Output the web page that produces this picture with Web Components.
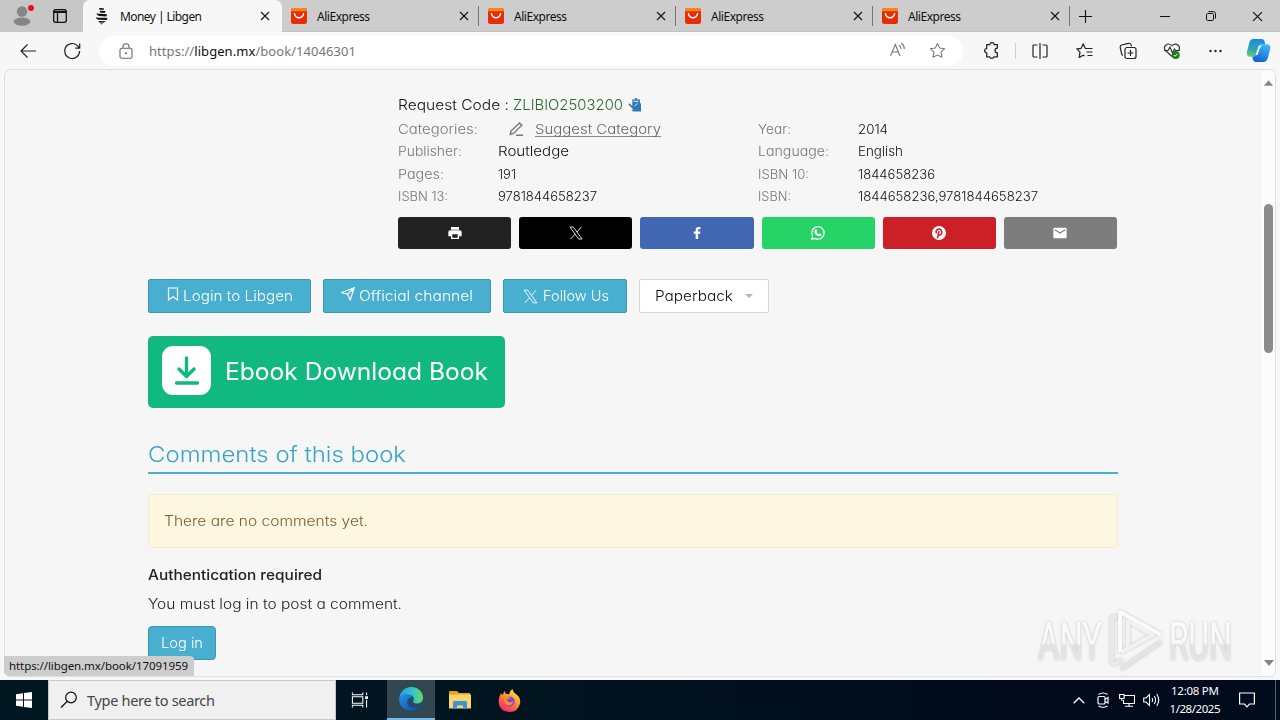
<!DOCTYPE html>
<html lang="en"><head><meta charset="utf-8"><title>Money | Libgen</title>
<style>
html,body{margin:0;width:1280px;height:720px;overflow:hidden;background:#f6f6f6}
body{font-family:"Noto Sans","Open Sans",sans-serif}
</style></head><body>
<desktop-screen></desktop-screen>
<script>
const ICONS={
person:['0 0 20 20','<circle cx="10" cy="5.5" r="5.2" fill="#858585"/><ellipse cx="10" cy="15.6" rx="8.3" ry="4.2" fill="#858585"/>'],
workspace:['0 0 16 16','<g fill="none" stroke="#111" stroke-width="1.3"><rect x="1.7" y="1.7" width="12.6" height="12.6" rx="2"/><path d="M2 3.900h12" stroke-width="2.200"/><path d="M5.500 5v9"/></g>'],
libgen:['0 0 14 18','<g fill="#111"><path d="M4 1.300Q6 .5 9 1.400V2.800L4.500 2.700zM4.800 3.700L10.500 4 9.800 6 5 5.400zM1.500 6.200C4 7 8 6.500 12 7.300L11.500 9.600 4 9C2.800 8.500 1.800 7.700 1.500 6.200zM1 10.200C4 11.200 8 10.500 12.500 11L11.700 13.100 4 12.800C2.200 12.500 1.200 11.700 1 10.200zM3.500 14.100L11 14.200 8.500 15.700 4 15.500zM5 16.300L8 16.400 6.500 17.500z"/></g>'],
ali:['0 0 16 16','<rect width="16" height="16" rx="2.5" fill="#e62e04"/><path d="M0 3.2V2.5A2.5 2.5 0 0 1 2.5 0h11A2.5 2.5 0 0 1 16 2.5v.7z" fill="#f7871d"/><path d="M3.500 5.800c1.200 5.200 7.800 5.200 9 0" fill="none" stroke="#fff" stroke-width="1.500" stroke-linecap="round"/>'],
x:['0 0 10 10','<path d="M1 1l8 8M9 1L1 9" fill="none" stroke="#111" stroke-width="1.1"/>'],
plus:['0 0 14 14','<path d="M7 0v14M0 7h14" stroke="#111" stroke-width="1.2"/>'],
min:['0 0 10 10','<path d="M0 5.5h10" stroke="#111"/>'],
restore:['0 0 10 10','<g fill="none" stroke="#111"><rect x=".5" y="2.5" width="7" height="7" rx="1.2"/><path d="M2.5.6H7.3Q9.5.6 9.5 2.8V7.5"/></g>'],
back:['0 0 18 16','<path d="M17 8H2M8.5 1.5L2 8l6.500 6.500" fill="none" stroke="#222" stroke-width="1.2"/>'],
reload:['0 0 18 18','<path d="M16.6 9A7.5 7.500 0 1 1 14.500 3.800L16.500 6M16.700 1.500V6.200H12.200" fill="none" stroke="#222" stroke-width="1.200"/>'],
lock:['0 0 14 16','<g fill="none" stroke="#666" stroke-width="1.100"><rect x="1" y="5.200" width="12" height="10" rx="1.800"/><path d="M4 5V3.700a3 3 0 0 1 6 0V5"/></g><circle cx="7" cy="10.200" r="1" fill="#666"/>'],
read:['0 0 18 16','<g fill="none" stroke="#777" stroke-width="1.100"><path d="M1.500 14L6.300 2.500 11 14M3.200 10h6.200M10 3q2 1.500 2 4M12.200 1q3.200 2.300 3.100 6"/></g>'],
star:['0 0 18 18','<path d="M9 1.500l2.300 4.900 5.300.7-3.900 3.700 1 5.400L9 13.600l-4.700 2.600 1-5.400L1.400 7.100l5.300-.7z" fill="none" stroke="#777" stroke-width="1.100" stroke-linejoin="round"/>'],
puzzle:['0 0 16 16','<path d="M3.500 2.500h3a2 2 0 0 1 4 0h3v3.300a2.200 2.200 0 0 0 0 4.400v3.800h-3.300a2 2 0 0 1-3.800 0H3.500v-3.800a2 2 0 0 1 0-4z" fill="none" stroke="#222" stroke-width="1.200" stroke-linejoin="round"/>'],
split:['0 0 16 16','<path d="M5.500 2H2q-1 0-1 1v10q0 1 1 1h3.500M10.500 2H14q1 0 1 1v10q0 1-1 1h-3.500M8 0v16" fill="none" stroke="#222" stroke-width="1.200"/>'],
favs:['0 0 18 16','<path d="M10.500 5.500L9.300 5.300 7.200.9 5.100 5.300.8 5.900l3.200 3.200-.8 5.300 4-2.200 1.300.7M10 5.500h6.500M10.500 9h6M11.500 12.500h5" fill="none" stroke="#222" stroke-width="1.200" stroke-linejoin="round"/>'],
coll:['0 0 18 18','<g fill="none" stroke="#222" stroke-width="1.200"><rect x="6" y="5.500" width="11" height="11" rx="2"/><path d="M11.500 8v6M8.500 11h6M4 13.500q-1-.4-1.300-1.400L1.200 5.300Q1 3.500 2.600 3L9.500 1.300q2-.3 2.600 1.600l.4 1.300"/></g>'],
heart:['0 0 18 18','<path d="M9 14.500L2.200 8.300C-.2 4.500 4.500-.4 9 3.600 13.500-.4 18 4.500 15.800 8.300M1 8.500h4l2-3.500 2.500 6 2-4 1 1.500H17" fill="none" stroke="#333" stroke-width="1.200"/><circle cx="12.700" cy="13" r="4" fill="#1b7d1b"/><path d="M10.800 13l1.300 1.300 2.500-2.500" fill="none" stroke="#fff"/>'],
dots:['0 0 14 4','<g fill="#222"><circle cx="2" cy="2" r="1.200"/><circle cx="7" cy="2" r="1.200"/><circle cx="12" cy="2" r="1.200"/></g>'],
copilot:['0 0 24 24','<defs><linearGradient id="a" x1=".5" y1="0" x2=".2" y2="1"><stop stop-color="#1a8be0"/><stop offset=".6" stop-color="#2aa7b8"/><stop offset="1" stop-color="#73c96b"/></linearGradient><linearGradient id="b" x1=".7" y1="0" x2=".3" y2="1"><stop stop-color="#39b8f5"/><stop offset="1" stop-color="#155fd6"/></linearGradient></defs><path d="M7 1h8q2.500 0 3 3l.4 2h-4q-2 0-2.700 2l-2.500 7.500Q8.500 18 6 18H3.500Q0 17.500 1 13L3.300 4Q4.300 1 7 1z" fill="url(#a)"/><path d="M17 23H9.500q-2.500 0-3-3L6 18q2.500 0 3.200-2.500L11.700 8q.7-2 2.700-2h6q3.600.5 2.900 4.500L20.700 20q-1 3-3.700 3z" fill="url(#b)"/><path d="M12.500 7.500h3.200q-2 .8-2.600 2.800l-1.600 4.700q-.8 2-2.500 1.500z" fill="#fff"/>'],
copy:['0 0 14 14','<path d="M4.300 1.500h2.200a1.500 1.500 0 0 1 3 0H12V5l1 .8V13.500H5L3.300 11.800H5.500L.5 6.500 1.300 5.300 4.300 8z" fill="#2f78b7"/><path d="M5.500 3.300h5M6.500 8.300L9.500 5.300" stroke="#f6f6f6" stroke-width="1"/>'],
pencil:['0 0 14 14','<path d="M1.300 12.400L2 9 10.500 1l2.300 2.200L4.500 11.400zM7 13.300h7" fill="none" stroke="#777" stroke-width="1.400"/>'],
print:['0 0 24 24','<path fill="#fff" d="M19 8H5c-1.660 0-3 1.340-3 3v6h4v4h12v-4h4v-6c0-1.660-1.340-3-3-3zm-3 11H8v-5h8v5zm2-16H6v4h12V3z"/>'],
tw:['0 0 24 24','<path d="M3 3h5l13 18h-5zM20 3L13.300 10.600M10.700 13.600L4 21" fill="none" stroke="#fff" stroke-width="1.300"/>'],
fb:['0 0 24 24','<path fill="#fff" d="M13.700 21v-8h3l.5-3.300h-3.500V7.800c0-1 .4-1.600 1.700-1.600h1.800V3.200C16 3 14.500 3 14 3c-2.600 0-4 1.600-4 4.300v2.400H7V13h3v8z"/>'],
wa:['0 0 24 24','<path d="M2.500 21.500l1.400-5A9.300 9.300 0 1 1 7.500 20z" fill="none" stroke="#fff" stroke-width="1.900"/><path d="M8 6.800q1.500-.8 2 .5l.7 1.700-1 1.400q1.300 2.500 3.900 3.600l1.300-1.500 2.500 1.200q0 3-3.500 3-5.500-.6-7.600-6.200Q6.500 8 8 6.800z" fill="#fff"/>'],
pin:['0 0 24 24','<circle cx="12" cy="12" r="10.500" fill="#fff"/><path d="M8.500 12.700Q6.500 9.500 9 7q3-2.300 6 .3 2.500 3.500 0 7-2 1.800-4-.1M12 9L9.600 20" fill="none" stroke="#cb2028" stroke-width="2.200"/>'],
mail:['0 0 24 24','<path fill="#fff" d="M20 4H4c-1.100 0-2 .9-2 2v12c0 1.100.9 2 2 2h16c1.100 0 2-.9 2-2V6c0-1.100-.9-2-2-2zm0 4l-8 5-8-5V6l8 5 8-5z"/>'],
mark:['0 0 12 14','<path d="M1.500 1h9v12L6 9.800 1.500 13z" fill="none" stroke="#fff" stroke-width="1.200"/>'],
send:['0 0 14 14','<path d="M.8 5.500L13.200.8 9.200 13 6.500 7.300zM6.500 7.300L13 1" fill="none" stroke="#fff" stroke-width="1.200"/>'],
caret:['0 0 8 4','<path d="M0 0h8L4 4z" fill="#b5b5b5"/>'],
dl:['0 0 49 49','<rect width="49" height="49" rx="11" fill="#fff"/><path d="M24.500 12v18M17 23l7.500 7.500L32 23M14.500 37h21" fill="none" stroke="#11b981" stroke-width="3.400" stroke-linecap="round" stroke-linejoin="round"/>'],
up:['0 0 10 6','<path d="M0 6L5 0l5 6z" fill="#858585"/>'],
down:['0 0 10 6','<path d="M0 0h10L5 6z" fill="#858585"/>'],
win:['0 0 16 16','<path d="M0 2.300L7 1.200V7.500H0zM8 1L16 0V7.500H8zM0 8.500H7V14.800L0 13.700zM8 8.500h8V16L8 15z" fill="#fff"/>'],
search:['0 0 18 18','<circle cx="11" cy="6.500" r="5.300" fill="none" stroke="#111" stroke-width="1.200"/><path d="M7 10.500L1 16.500" stroke="#111" stroke-width="1.300"/>'],
task:['0 0 18 16','<path d="M1.500 0v2.500h11V0M1.500 16v-2.500h11V16M1.500 4.500h11v7h-11zM16.500 0v3M16.500 8v8" fill="none" stroke="#fff" stroke-width="1.100"/><rect x="15" y="4" width="3" height="3" fill="#fff"/>'],
edge:['0 0 24 24','<defs><linearGradient id="e" x1="0" x2="1"><stop stop-color="#299fe0"/><stop offset=".55" stop-color="#2fc2cf"/><stop offset="1" stop-color="#63dd62"/></linearGradient><linearGradient id="f" x1="0" y1="0" x2="1" y2="1"><stop stop-color="#2494e0"/><stop offset="1" stop-color="#0b4aa0"/></linearGradient></defs><path d="M.2 10.500C1.500 3.500 7 0 12 0c7 0 12 5 12 10.500 0 4-3 6-6.500 6-2.500 0-4-1-3.200-2.200C16 11 13.500 8 9.500 7.800 5 7.600 1.500 9 .2 10.500z" fill="url(#e)"/><path d="M.1 12C1 8.500 5 6.500 9 7.600c2.500.7 4 2 4.700 3.400C9 10 7 14 9 18c1.800 3.600 8 4 12.700 1-2 3-5.700 5-9.700 5C5 24 0 18.500.1 12z" fill="url(#f)"/><path d="M13.700 11c-3 0-5 3-4 6 1.800 4.500 8 4.500 12.300 1.600" fill="none" stroke="#124ea0" stroke-width="1.500"/>'],
folder:['0 0 22 18','<path d="M0 1q0-1 1-1h7l2 2h11v4H0z" fill="#e8a317"/><rect y="3.500" width="22" height="14" fill="#fbd66b"/><path d="M4 18v-6.500q0-1.500 1.500-1.500h11q1.500 0 1.500 1.500V18h-4v-3.500H8V18z" fill="#3a95d8"/>'],
firefox:['0 0 24 24','<defs><linearGradient id="g" x1=".8" y1="0" x2=".2" y2="1"><stop stop-color="#fff04a"/><stop offset=".4" stop-color="#ff9a2a"/><stop offset=".75" stop-color="#ff4a50"/><stop offset="1" stop-color="#e5247a"/></linearGradient></defs><path d="M1.500 8L3 4.500 4.500 6.200 7 2l1 3q2 0 3.500.7Q12 2 15 0q.3 3 4 5.500Q24 9 23 15q-2 8.500-11 9Q2 23.500.7 14.500.5 10.500 1.500 8z" fill="url(#g)"/><circle cx="12" cy="13" r="5.300" fill="#7846d8"/><path d="M6 8.500q4-2.500 7 0-1 2-3.500 2.300-.5 1.500 1.500 2.700 3 1 4.500-1 .5 4-4 4.800Q6 17 6 8.500z" fill="#ff8a2d"/>'],
chev:['0 0 12 7','<path d="M.7 6.300L6 1l5.300 5.300" fill="none" stroke="#fff" stroke-width="1.300"/>'],
cam:['0 0 14 16','<g fill="none" stroke="#fff" stroke-width="1.200"><rect x="2" y="4.500" width="7" height="7.500" rx="1.300"/><path d="M9 7.500L12 5.500V11L9 9.500M2.500 2.500q4.500-3 9 0M2.500 14q4.500 2.500 9 0"/></g>'],
net:['0 0 16 14','<path d="M4.500 2.500H15.500v8H4.500V7M10 10.500V13M6 13.300h8M.6 1.500h4.500v4H.6zM2.800 5.500V8" fill="none" stroke="#fff" stroke-width="1.100"/>'],
vol:['0 0 17 14','<path d="M.7 5H3l3.500-3.500v11L3 9H.7zM9 5q1.200 2 0 4M11.300 3q2.500 4 0 8M13.700 1q4 6 0 12" fill="none" stroke="#fff" stroke-width="1.100"/>'],
note:['0 0 16 16','<path d="M.6 1h14.800v11H10.500L8 14.800 5.500 12H.6z" fill="none" stroke="#fff" stroke-width="1.200"/>']
};
const make=(name,html,setup)=>customElements.define(name,class extends HTMLElement{
  constructor(){super();this.attachShadow({mode:'open'})}
  connectedCallback(){if(this.shadowRoot.childNodes.length)return;this.shadowRoot.innerHTML=typeof html==='function'?html(this):html;if(setup)setup(this)}
});
const ic=(n,w,h,s='')=>`<ui-icon name="${n}" w="${w}" h="${h||w}" style="${s}"></ui-icon>`;
const t=(w,s)=>`<fit-text w="${w}">${s}</fit-text>`;
const p=(w,s)=>`<fit-text stretch w="${w}">${s}</fit-text>`;

make('ui-icon',e=>{const i=ICONS[e.getAttribute('name')],w=e.getAttribute('w'),h=e.getAttribute('h');
 return `<style>:host{display:inline-block;flex:none;width:${w}px;height:${h}px}svg{display:block}</style><svg width="${w}" height="${h}" viewBox="${i[0]}">${i[1]}</svg>`});

make('browser-tab',e=>`<style>:host{display:flex;align-items:center;box-sizing:border-box;width:197px;height:32px;padding:0 10px 0 9px;font-size:12px;color:#111;flex:none;background:linear-gradient(#777,#777) right 6px/1px 20px no-repeat}
:host([active]){background:#f7f7f7;border-radius:7px 7px 0 0;width:199px;padding-left:12px;padding-right:12px}
.l{flex:1;margin-left:10px}:host([active]) .l{margin-left:11px}</style>${e.hasAttribute('active')?ic('libgen',14,18):ic('ali',16)}<span class="l"><slot></slot></span>${ic('x',10)}`);

make('tab-strip',`<style>:host{display:flex;height:32px;background:#cdcdcd;align-items:center;box-shadow:inset 0 -1px #c0c0c0}
.p{display:flex;width:83px;height:32px;box-sizing:border-box;padding-left:12px;align-items:center;gap:20px;background:#c7c7c7;border-radius:0 0 6px 0;position:relative}
.p i{position:absolute;left:28px;top:5px;width:6px;height:6px;border-radius:50%;background:#e81123}
.w{display:flex;margin-left:auto;gap:36px;padding-right:17px;align-items:center}</style>
<div class="p">${ic('person',20)}<i></i>${ic('workspace',16)}</div>
<browser-tab active>${t(82,'Money | Libgen')}</browser-tab>
<browser-tab>${t(53,'AliExpress')}</browser-tab><browser-tab>${t(53,'AliExpress')}</browser-tab><browser-tab>${t(53,'AliExpress')}</browser-tab><browser-tab>${t(53,'AliExpress')}</browser-tab>
${ic('plus',13,13,'margin-left:9px')}
<div class="w">${ic('min',10)}${ic('restore',10)}${ic('x',11)}</div>`);

make('tool-bar',`<style>:host{display:flex;height:37px;background:#f7f7f7;align-items:center;padding-left:19px}
.a{display:flex;box-sizing:border-box;width:864px;height:30px;background:#fff;border-radius:15px;margin-left:18px;align-items:center;padding:0 17px 0 20px;font-size:13px;color:#757575}
.a b{font-weight:400;color:#111}.g{margin-left:auto;display:flex;gap:22px}
.r{display:flex;align-items:center;margin-left:20px}.s{width:1px;height:16px;background:#d0d0d0;margin:0 16px 0 15px}</style>
${ic('back',18,16)}${ic('reload',18,18,'margin-left:26px')}
<div class="a">${ic('lock',14,16,'margin-right:16px')}${t(207,'https://<b>libgen.mx</b>/book/14046301')}<span class="g">${ic('read',18,16)}${ic('star',17,17)}</span></div>
<div class="r">${ic('puzzle',17)}<span class="s"></span>${ic('split',16)}${ic('favs',18,16,'margin-left:28px')}${ic('coll',18,18,'margin-left:25px')}${ic('heart',18,18,'margin-left:26px')}${ic('dots',15,4,'margin-left:27px')}${ic('copilot',25,25,'margin-left:23px')}</div>`);

make('detail-row',`<style>:host{display:grid;grid-template-columns:100px 260px 100px 1fr;height:22.300px;align-items:center;font-size:13px;color:#111}.k{color:#777}slot{display:block}</style>
<span class="k"><slot name="a"></slot></span><slot name="b"></slot><span class="k"><slot name="c"></slot></span><slot name="d"></slot>`);
make('share-button',e=>`<style>:host{display:flex;flex:1;height:32px;border-radius:3px;align-items:center;justify-content:center;background:${e.getAttribute('bg')}}</style>${ic(e.getAttribute('icon'),16)}`);
make('action-button',`<style>:host{display:flex;box-sizing:border-box;height:34px;align-items:center;justify-content:center;background:#49afd0;border:1px solid #4094b2;border-radius:2px;color:#fff;font-size:14.500px;gap:4px;padding-bottom:1px}
:host([plain]){background:#fff;border-color:#d5d5d5;color:#111;gap:12px}:host([round]){border-radius:4px}</style><slot></slot>`);
const row=(a,aw,b,bw,c,cw,d,dw)=>`<detail-row><span slot="a">${p(aw,a)}</span><span slot="b">${b.startsWith('<')?b:p(bw,b)}</span><span slot="c">${p(cw,c)}</span><span slot="d">${p(dw,d)}</span></detail-row>`;

make('book-page',`<style>:host{display:block;flex:1;padding:0 144px 0 143px;font-family:Inter,"Open Sans",sans-serif;font-weight:300;font-feature-settings:"cv11","ss03";color:#222}
.d{margin-left:250px;padding-top:24px;width:719px}.q{display:flex;height:24px;line-height:22px;font-size:14.500px;color:#111}.q .g{color:#2b6a2e;margin:0 5px 0 4px}
.sg{display:flex;align-items:center;color:#666}.sg u{display:inline-flex;text-decoration:none;border-bottom:1px solid #888;line-height:14px;margin-top:1px}
.s{display:flex;gap:8px;margin-top:9.500px}.b{display:flex;gap:12px;margin-top:30px}
.dl{display:flex;box-sizing:border-box;width:357px;height:72px;margin-top:23px;background:#11b981;border-radius:5px;align-items:center;padding:0 0 2px 14px;gap:14px;color:#fff;font-size:24px;font-weight:400}
.dl fit-text{margin-top:2px}
h2{font-weight:300;font-size:22px;line-height:35px;color:#35a5c9;margin:29px 0 20px;border-bottom:2px solid #49afd0;height:35px;width:970px}
.n{box-sizing:border-box;width:970px;height:54px;background:#fdf6e1;border:1px solid #f8ead0;border-radius:4px;padding-left:15px;line-height:51px;font-size:14px;color:#7d5c2c}
.t{font-size:14px;line-height:20px}</style>
<div class="d"><div class="q">${p(111,'Request Code :')}<span class="g">${p(110,'ZLIBIO2503200')}</span>${ic('copy',14,14,'margin-top:4px')}</div>
${row('Categories:',80,`<span class="sg">${ic('pencil',14,14,'margin:0 12px 0 11px')}<u>${p(126,'Suggest Category')}</u></span>`,0,'Year:',33,'2014',30)}
${row('Publisher:',64,'Routledge',71,'Language:',71,'English',45)}
${row('Pages:',46,'191',18,'ISBN 10:',51,'1844658236',77)}
${row('ISBN 13:',50,'9781844658237',99,'ISBN:',33,'1844658236,9781844658237',180)}
<div class="s"><share-button icon="print" bg="#222"></share-button><share-button icon="tw" bg="#000"></share-button><share-button icon="fb" bg="#4267b2"></share-button><share-button icon="wa" bg="#25d366"></share-button><share-button icon="pin" bg="#cb2028"></share-button><share-button icon="mail" bg="#7d7d7d"></share-button></div></div>
<div class="b"><action-button style="width:163px">${ic('mark',12,14,'margin-top:-2px')}${p(110,'Login to Libgen')}</action-button><action-button style="width:168px">${ic('send',14,14,'margin-top:-3px')}${p(114,'Official channel')}</action-button><action-button style="width:124px">${ic('tw',17,17,'margin-top:2px')}${p(66,'Follow Us')}</action-button><action-button plain style="width:130px">${p(78,'Paperback')}${ic('caret',8,4,'margin-top:2px')}</action-button></div>
<div class="dl">${ic('dl',49)}${p(263,'Ebook Download Book')}</div>
<h2>${p(258,'Comments of this book')}</h2>
<div class="n">${p(204,'There are no comments yet.')}</div>
<div class="t" style="font-weight:500;margin-top:17px">${p(174,'Authentication required')}</div>
<div class="t" style="margin:9px 0 12px">${p(254,'You must log in to post a comment.')}</div>
<action-button round style="width:68px">${p(42,'Log in')}</action-button>`);

make('scroll-bar',`<style>:host{display:flex;flex-direction:column;align-items:center;width:14px;background:#fcfcfc;padding-top:10px;box-sizing:border-box}i{width:9px;height:149px;border-radius:5px;background:#8b8b8b;margin:118px 0 auto}</style>${ic('up',9,6)}<i></i>${ic('down',10,6,'margin-bottom:10px')}`);

make('any-watermark',`<style>:host{position:absolute;left:1020px;top:600px;width:230px;height:78px}</style>
<svg width="230" height="78"><defs><linearGradient id="w" x1="0" y1="0" x2="0" y2="1"><stop stop-color="#fcfcfc"/><stop offset=".52" stop-color="#f8f8f8"/><stop offset=".56" stop-color="#e2e2e2"/><stop offset="1" stop-color="#e9e9e9"/></linearGradient><filter id="s" x="-10%" y="-20%" width="120%" height="140%"><feDropShadow dx="0" dy="0" stdDeviation="1.500" flood-color="#aaa" flood-opacity=".7"/></filter></defs>
<g filter="url(#s)" fill="url(#w)" font-family="Roboto,sans-serif" font-size="53"><text x="18" y="60" textLength="64" lengthAdjust="spacingAndGlyphs">ANY</text><text x="149" y="60" textLength="63" lengthAdjust="spacingAndGlyphs">RUN</text>
<g fill="none" stroke-width="4" stroke-linejoin="round"><path d="M97 17H92V62Q92 65 96 63L102 60" stroke="#e9e9e9"/><path d="M100 52V12L141 35" stroke="#fafafa"/><path d="M101 52L133 35L108 21V48" stroke="#f2f2f2"/><path d="M101 69L141 42" stroke="#e4e4e4"/></g></g></svg>`);

make('web-frame',`<style>:host{display:flex;box-sizing:border-box;height:608px;margin:0 4px;border:1px solid #dedede;border-radius:7px;background:#f6f6f6;overflow:hidden}</style><book-page></book-page><scroll-bar></scroll-bar>`);
make('status-tip',`<style>:host{position:absolute;left:4px;top:656px;box-sizing:border-box;width:190px;height:20px;padding-left:5px;line-height:19px;background:#cdcdcd;border-radius:0 4px 0 5px;font-size:11.500px;color:#111}</style>${t(179,'https://libgen.mx/book/17091959')}`);

make('task-bar',`<style>:host{display:flex;height:40px;margin-top:3px;background:linear-gradient(90deg,#001722,#001420 40%,#000a1a 80%,#000b1c);color:#fff;align-items:center}
.w{width:48px;display:flex;justify-content:center}.q{box-sizing:border-box;width:288px;height:40px;background:#f0f0f0;border:1px solid #c8c8c8;display:flex;align-items:center;padding-left:11px;gap:9px;font-size:14.500px;color:#444}
.e{display:flex;width:48px;height:40px;box-sizing:border-box;align-items:center;justify-content:center;background:#324850;border-bottom:2px solid #76b9ed;margin-left:3px}
.r{display:flex;align-items:center;margin-left:auto;height:40px}.c{width:52px;margin:0 18px 0 9px;font-size:11.500px;line-height:18px;text-align:center;display:flex;flex-direction:column;align-items:center;padding-bottom:1px}
.z{width:1px;height:40px;background:#56616c;margin:0 4px 0 20px}</style>
<div class="w">${ic('win',16)}</div><div class="q">${ic('search',18)}${t(128,'Type here to search')}</div>
<div class="w" style="width:46px;margin-right:2px">${ic('task',17,16)}</div><div class="e">${ic('edge',24)}</div><div class="w" style="width:50px">${ic('folder',22,18)}</div><div class="w">${ic('firefox',23,23)}</div>
<div class="r">${ic('chev',12,7)}${ic('cam',14,16,'margin-left:11px')}${ic('net',16,14,'margin-left:9px')}${ic('vol',17,14,'margin-left:8px')}<div class="c">${t(48,'12:08 PM')}${t(51,'1/28/2025')}</div>${ic('note',16)}<i class="z"></i></div>`);

make('desktop-screen',`<style>:host{display:flex;flex-direction:column;width:1280px;height:720px;position:relative;background:#f7f7f7}</style><tab-strip></tab-strip><tool-bar></tool-bar><web-frame></web-frame><task-bar></task-bar><any-watermark></any-watermark><status-tip></status-tip>`);

/* Sets one line of text to the width in its "w" attribute: by tracking, or with "stretch" by widening the glyphs. */
make('fit-text',`<style>:host{display:inline-block;white-space:nowrap}span{display:inline-block;transform-origin:0 50%}</style><span><slot></slot></span>`,e=>{
 const w=+e.getAttribute('w'),n=e.textContent.length,now=e.getBoundingClientRect().width;
 if(e.hasAttribute('stretch')){e.shadowRoot.querySelector('span').style.transform=`scaleX(${w/now})`;e.style.width=w+'px'}
 else{const d=(w-now)/(n-1);e.style.letterSpacing=d+'px';e.style.marginRight=-d+'px'}});
</script></body></html>
